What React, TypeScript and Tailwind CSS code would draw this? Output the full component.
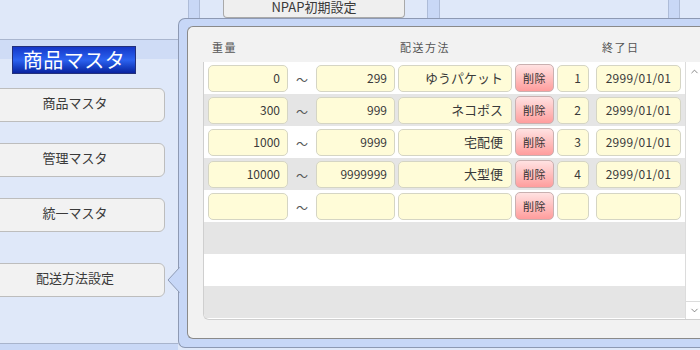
import { ChevronDown, ChevronUp } from 'lucide-react';
import clsx from 'clsx';

type Row = { from: string; to: string; method: string; no: string; end: string };

const rows: Row[] = [
  { from: '0', to: '299', method: 'ゆうパケット', no: '1', end: '2999/01/01' },
  { from: '300', to: '999', method: 'ネコポス', no: '2', end: '2999/01/01' },
  { from: '1000', to: '9999', method: '宅配便', no: '3', end: '2999/01/01' },
  { from: '10000', to: '9999999', method: '大型便', no: '4', end: '2999/01/01' },
  { from: '', to: '', method: '', no: '', end: '' },
];

function Box({ className, children }: { className?: string; children?: React.ReactNode }) {
  return (
    <div
      className={clsx(
        'h-[27px] shrink-0 overflow-hidden whitespace-nowrap rounded-[5px] border border-[#d5d5c4] bg-[#fffcd8] pt-[1px] text-[12px] leading-[22px] text-[#3a3a3a]',
        className,
      )}
    >
      {children}
    </div>
  );
}

function SideButton({ label, className }: { label: string; className?: string }) {
  return (
    <div
      className={clsx(
        '-ml-[8px] flex h-[34px] w-[173px] items-center justify-center rounded-[6px] border border-[#bdbdbd] bg-[#f2f2f2] pb-[4px] pr-[7px] text-[13px] text-[#3a3a3a]',
        className,
      )}
    >
      {label}
    </div>
  );
}

function DataRow({ row, shaded }: { row: Row; shaded: boolean }) {
  return (
    <div className={clsx('flex h-[32px] items-center pl-[4px]', shaded ? 'bg-[#e5e5e5]' : 'bg-white')}>
      <Box className="w-[80px] pr-[7px] text-right">{row.from}</Box>
      <div className="w-[28px] shrink-0 pt-[3px] text-center text-[12px] text-[#555]">～</div>
      <Box className="w-[79px] pr-[7px] text-right">{row.to}</Box>
      <Box className="ml-[3px] w-[114px] pr-[8px] text-right text-[13px]">{row.method}</Box>
      <div className="ml-[3px] flex h-[28px] w-[39px] shrink-0 items-center justify-center rounded-[5px] border border-[#c9b0b0] bg-gradient-to-b from-[#ffe2e2] to-[#ff9d9d] text-[11px] tracking-[0.5px] text-[#333]">
        削除
      </div>
      <Box className="ml-[3px] w-[32px] pr-[7px] text-right">{row.no}</Box>
      <Box className="ml-[7px] w-[85px] text-center tracking-[0.3px]">{row.end}</Box>
    </div>
  );
}

export default function App() {
  return (
    <div className="relative h-[350px] w-[700px] overflow-hidden bg-[#dfe8f9] font-['Noto_Sans_CJK_JP',sans-serif]">
      {/* top strip */}
      <div className="flex h-[18px]">
        <div className="w-[188px]" />
        <div className="w-[12px] border-x border-[#aebcd8] bg-[#c9d8f6]" />
        <div className="w-[23px]" />
        <div className="w-[182px] overflow-hidden rounded-b-[4px] border border-t-0 border-[#a9a9a9] bg-[#efefef] text-center text-[13px] leading-[14px] text-[#3a3a3a]">
          NPAP初期設定
        </div>
        <div className="w-[23px] border-r border-[#aebcd8]" />
        <div className="w-[12px] border-r border-[#aebcd8] bg-[#c9d8f6]" />
        <div className="w-[228px]" />
        <div className="w-[12px] border-x border-[#aebcd8] bg-[#c9d8f6]" />
      </div>

      <div className="flex h-[332px]">
        {/* left menu */}
        <div className="flex w-[178px] flex-col">
          <div className="h-[21px]" />
          <div className="h-[20px] border-t border-[#aab6cf] bg-[#cfdcf6]">
            <div className="ml-[12px] mt-[6px] flex h-[28px] w-[124px] items-center justify-center border border-[#23307a] bg-gradient-to-b from-[#1536c8] via-[#2c62f0] to-[#0a22a0] text-[20px] leading-[20px] tracking-[0.5px] text-white">
              商品マスタ
            </div>
          </div>
          <SideButton label="商品マスタ" className="mt-[29px]" />
          <SideButton label="管理マスタ" className="mt-[21px]" />
          <SideButton label="統一マスタ" className="mt-[21px]" />
          <SideButton label="配送方法設定" className="mt-[31px]" />
          <div className="flex-1" />
          <div className="h-[7px] border-t border-[#a8b4cc] bg-[#c9d8f6]" />
        </div>

        {/* popup */}
        <div className="relative h-[330px] flex-1 self-start rounded-l-[7px] border border-r-0 border-[#8d99b3] bg-[#c7d7f7] pb-[7px] pl-[8px] pt-[7px]">
          <svg className="absolute left-[-12px] top-[248px]" width="13" height="26" viewBox="0 0 13 26">
            <polygon points="13,0 1,13 13,26" fill="#c7d7f7" />
            <path d="M12.5,0.5 L1,13 L12.5,25.5" fill="none" stroke="#8d99b3" strokeWidth="1" />
          </svg>

          <div className="flex h-[313px] flex-col rounded-l-[6px] border border-r-0 border-[#8a8a8a] bg-[#f2f2f2] pl-[15px]">
            {/* headers */}
            <div className="flex h-[35px] pl-[5px] pt-[13px] text-[11px] leading-[14px] tracking-[1.5px] text-[#555]">
              <div className="w-[80px] shrink-0 pl-[4px]">重量</div>
              <div className="w-[110px] shrink-0" />
              <div className="w-[114px] shrink-0 pl-[2px]">配送方法</div>
              <div className="w-[84px] shrink-0" />
              <div className="w-[85px] shrink-0 pl-[6px]">終了日</div>
            </div>

            {/* table */}
            <div className="flex h-[258px] overflow-hidden rounded-bl-[6px] border-b border-l border-[#cfcfcf] bg-white">
              <div className="flex-1">
                {rows.map((r, i) => (
                  <DataRow key={i} row={r} shaded={i % 2 === 1} />
                ))}
                <div className="h-[32px] bg-[#e5e5e5]" />
                <div className="h-[32px] bg-white" />
                <div className="h-[32px] bg-[#e5e5e5]" />
              </div>
              <div className="flex w-[15px] flex-col justify-between border-l border-[#dcdcdc] bg-white">
                <div className="flex h-[18px] items-center justify-center pl-[3px]">
                  <ChevronUp size={11} strokeWidth={1.5} color="#555" />
                </div>
                <div className="flex h-[18px] items-center justify-center border-t border-[#dcdcdc] pl-[3px]">
                  <ChevronDown size={11} strokeWidth={1.5} color="#555" />
                </div>
              </div>
            </div>
          </div>
        </div>
      </div>
    </div>
  );
}
